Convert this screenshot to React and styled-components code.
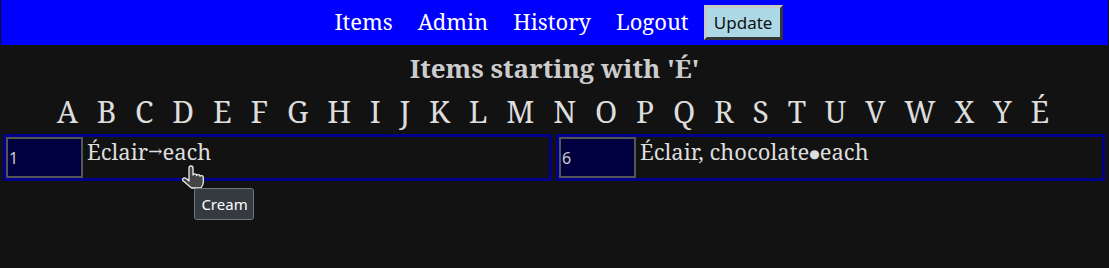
import React from "react";
import styled, { createGlobalStyle } from "styled-components";

const GlobalStyle = createGlobalStyle`
  body {
    margin: 0;
    background: #121212;
    color: #ddd;
    font-family: "Noto Serif", "DejaVu Serif", serif;
  }
`;

const letters = "ABCDEFGHIJKLMNOPQRSTUVWXYÉ".split("");

const items = [
  { qty: "1", name: "Éclair", sep: "→", unit: "each", tip: "Cream" },
  { qty: "6", name: "Éclair, chocolate", sep: "●", unit: "each" },
];

function HandCursor() {
  return (
    <svg width="24" height="25" viewBox="0 0 24 25">
      <path
        d="M8 3Q8 1 10 1Q12 1 12 3V10Q12 8.8 13.8 8.8Q15.6 8.8 15.6 10.6Q15.6 9.6 17.3 9.6Q19 9.6 19 11.3Q19 10.6 20.6 10.6Q22.3 10.6 22.3 12.4V17Q22.3 20.5 19.8 23H10.5L1.8 15.4Q1 14 2.4 13.2Q3.8 12.5 5.2 13.6L8 16Z"
        fill="#454545"
        stroke="#eee"
        strokeWidth="1.3"
        strokeLinejoin="round"
      />
    </svg>
  );
}

export default function App() {
  return (
    <Page>
      <GlobalStyle />
      <Header>
        <NavLink>Items</NavLink>
        <NavLink>Admin</NavLink>
        <NavLink>History</NavLink>
        <NavLink>Logout</NavLink>
        <UpdateButton>Update</UpdateButton>
      </Header>
      <Title>Items starting with 'É'</Title>
      <LetterBar>
        {letters.map((l) => (
          <Letter key={l}>{l}</Letter>
        ))}
      </LetterBar>
      <Grid>
        {items.map((it) => (
          <Card key={it.name}>
            <QtyInput defaultValue={it.qty} />
            <Label>
              {it.name}
              <Sep $dot={it.sep === "●"}>{it.sep}</Sep>
              <Unit>
                {it.unit}
                {it.tip && (
                  <>
                    <Cursor>
                      <HandCursor />
                    </Cursor>
                    <Tooltip>{it.tip}</Tooltip>
                  </>
                )}
              </Unit>
            </Label>
          </Card>
        ))}
      </Grid>
    </Page>
  );
}

const Page = styled.div`
  width: 1109px;
  height: 268px;
  overflow: hidden;
`;

const Header = styled.nav`
  margin: 0 1px;
  height: 45px;
  background: #0000ff;
  display: flex;
  align-items: center;
  justify-content: center;
  gap: 25px;
  padding-left: 8px;
`;

const NavLink = styled.a`
  color: #fff;
  font-size: 22px;
  margin-bottom: 4px;
  cursor: pointer;
`;

const UpdateButton = styled.button`
  margin-left: -10px;
  background: #add8e6;
  border: 3px outset #c8c8c8;
  border-right-color: #888;
  border-bottom-color: #888;
  font-family: "Noto Sans", sans-serif;
  font-size: 17px;
  color: #111;
  width: 79px;
  height: 35px;
  padding: 0;
`;

const Title = styled.h2`
  margin: 7px 0 0;
  text-align: center;
  font-size: 26px;
  color: #ccc;
  line-height: 32px;
`;

const LetterBar = styled.div`
  display: flex;
  justify-content: center;
  gap: 18.8px;
  margin-top: 10px;
  padding-right: 3px;
`;

const Letter = styled.a`
  font-size: 30px;
  line-height: 36px;
  color: #ddd;
  cursor: pointer;
`;

const Grid = styled.div`
  display: grid;
  grid-template-columns: 1fr 1fr;
  gap: 4px;
  padding: 0 4px 0 3px;
  margin-top: 4px;
`;

const Card = styled.div`
  border: 3px solid #00008b;
  height: 41px;
  display: flex;
  align-items: flex-start;
  gap: 4px;
`;

const QtyInput = styled.input`
  box-sizing: border-box;
  width: 77px;
  height: 41px;
  margin: 0;
  background: #000040;
  border: 2px solid #555;
  color: #ccc;
  font-family: "Noto Sans", sans-serif;
  font-size: 16px;
  padding: 0 0 0 1px;
`;

const Label = styled.span`
  font-size: 22px;
  color: #ddd;
  line-height: 30px;
  margin-top: -1px;
`;

const Sep = styled.span`
  font-size: ${(p) => (p.$dot ? "12px" : "17px")};
  vertical-align: ${(p) => (p.$dot ? "2px" : "3px")};
`;

const Unit = styled.span`
  position: relative;
`;

const Cursor = styled.span`
  position: absolute;
  left: 19px;
  top: 29px;
`;

const Tooltip = styled.span`
  position: absolute;
  left: 32px;
  top: 52px;
  background: #343a40;
  border: 1px solid #6c757d;
  border-radius: 3px;
  color: #fff;
  font-family: "Noto Sans", sans-serif;
  font-size: 15px;
  line-height: 20px;
  padding: 5px 5px 5px 6px;
  white-space: nowrap;
`;
